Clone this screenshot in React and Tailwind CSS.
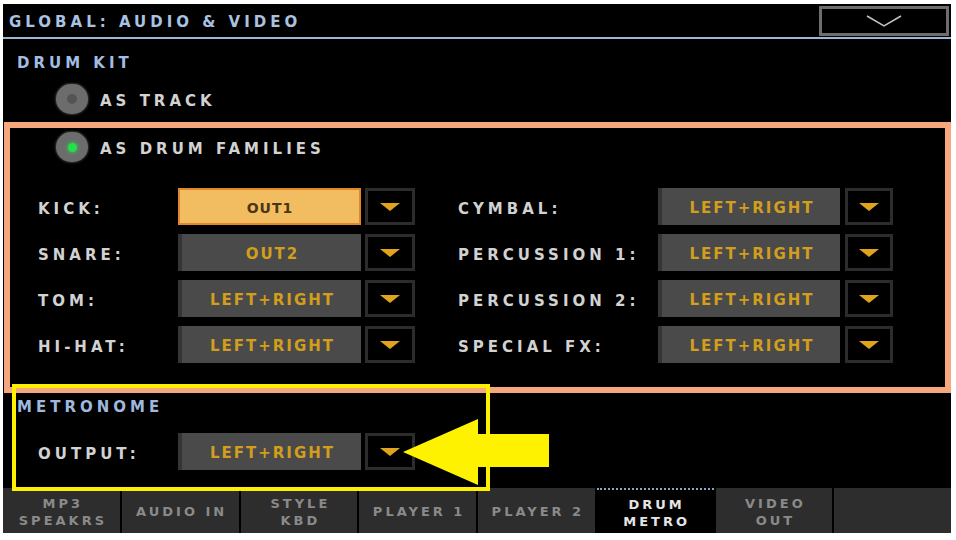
import React from "react";

const Arrow = () => (
  <svg width="20" height="8" viewBox="0 0 20 8">
    <polygon points="0,0 20,0 10,8" fill="#e0a41c" />
  </svg>
);

const Field = ({ value, active, w }) => (
  <div
    className={
      active
        ? `${w} h-[37px] pt-[3px] flex items-center justify-center bg-[#f2bd60] border-2 border-[#e2862a] text-[#4a3515] text-[14px] font-bold tracking-[1px]`
        : `${w} h-[37px] pt-[3px] flex items-center justify-center bg-[#4a4a4a] border-l-[4px] border-[#353535] text-[#d29e1c] text-[15px] font-bold tracking-[2px]`
    }
  >
    <span className={active ? "mr-[-1px]" : "mr-[-2px]"}>{value}</span>
  </div>
);

const DropBtn = ({ w, ml }) => (
  <div className={`${w} ${ml} h-[37px] flex items-center justify-center bg-black border-[3px] border-[#2c2c2c]`}>
    <Arrow />
  </div>
);

const Radio = ({ on }) => (
  <div className="w-[32px] h-[30px] rounded-full bg-[#6c6c6c] flex items-center justify-center shadow-[0_0_3px_#6c6c6c]">
    {on ? (
      <div className="w-[9px] h-[9px] rounded-full bg-[#22e048] shadow-[0_0_4px_#22e048]" />
    ) : (
      <div className="w-[10px] h-[10px] rounded-full bg-[#545454]" />
    )}
  </div>
);

const rows = [
  ["KICK:", "OUT1", true, "CYMBAL:", "LEFT+RIGHT"],
  ["SNARE:", "OUT2", false, "PERCUSSION 1:", "LEFT+RIGHT"],
  ["TOM:", "LEFT+RIGHT", false, "PERCUSSION 2:", "LEFT+RIGHT"],
  ["HI-HAT:", "LEFT+RIGHT", false, "SPECIAL FX:", "LEFT+RIGHT"],
];

const tabs = [
  ["MP3", "SPEAKRS"],
  ["AUDIO IN"],
  ["STYLE", "KBD"],
  ["PLAYER 1"],
  ["PLAYER 2"],
  ["DRUM", "METRO"],
  ["VIDEO", "OUT"],
  [],
];

export default function App() {
  return (
    <div className="w-[956px] h-[540px] bg-white pt-[4px] pl-[3px] font-['DejaVu_Sans',sans-serif] font-bold text-[15px] tracking-[4px] text-[#d2d2d2] overflow-hidden">
      <div className="relative w-[948px] h-[529px] bg-black flex flex-col">
        {/* header */}
        <div className="flex h-[35px] shrink-0 border-b-2 border-[#9db6d6]">
          <div className="pl-[6px] pt-[4px] h-[33px] flex items-center text-[#a9c2e2]">GLOBAL: AUDIO &amp; VIDEO</div>
          <div className="ml-auto mr-[2px] mt-[2px] w-[130px] h-[30px] border-[3px] border-[#6d6d6d] flex items-center justify-center">
            <svg width="36" height="12" viewBox="0 0 36 12">
              <polyline points="1,1 18,11 35,1" fill="none" stroke="#c4c4c4" strokeWidth="1.5" />
            </svg>
          </div>
        </div>

        <div className="h-[44px] shrink-0 pt-[4px] flex items-center pl-[14px] text-[#a3bde0]">DRUM KIT</div>
        <div className="h-[32px] shrink-0 flex items-center gap-[12px] pl-[53px]">
          <Radio />
          <span className="pt-[5px]">AS TRACK</span>
        </div>

        {/* drum families */}
        <div className="mt-[7px] ml-[1px] w-[947px] border-[6px] border-[#f5a77e] pb-[24px]">
          <div className="h-[38px] flex items-center gap-[12px] pl-[46px]">
            <Radio on />
            <span className="pt-[5px]">AS DRUM FAMILIES</span>
          </div>
          <div className="mt-[22px] flex flex-col gap-[9px] pl-[28px]">
            {rows.map(([l1, v1, act, l2, v2]) => (
              <div key={l1} className="flex items-center">
                <div className="w-[140px] pt-[5px]">{l1}</div>
                <Field value={v1} active={act} w="w-[183px]" />
                <DropBtn w="w-[50px]" ml="ml-[4px]" />
                <div className="w-[200px] ml-[43px] pt-[5px] whitespace-nowrap">{l2}</div>
                <Field value={v2} w="w-[182px]" />
                <DropBtn w="w-[48px]" ml="ml-[5px]" />
              </div>
            ))}
          </div>
        </div>

        {/* metronome */}
        <div className="h-[24px] shrink-0 pt-[4px] flex items-center pl-[14px] text-[#9fb9de]">METRONOME</div>
        <div className="mt-[16px] flex items-center pl-[35px]">
          <div className="w-[140px] pt-[5px]">OUTPUT:</div>
          <Field value="LEFT+RIGHT" w="w-[183px]" />
          <DropBtn w="w-[50px]" ml="ml-[4px]" />
        </div>

        {/* tabs */}
        <div className="mt-auto h-[45px] grid grid-cols-8 gap-x-[2px] bg-black">
          {tabs.map((t, i) =>
            i === 5 ? (
              <div key={i} className="flex flex-col items-center justify-center pt-[2px] bg-black border-t-2 border-dotted border-[#8ea4c4] text-[#e4e4e4] text-[13px] leading-[17px] tracking-[3px] pl-[3px]">
                {t.map((s) => (
                  <span key={s}>{s}</span>
                ))}
              </div>
            ) : (
              <div key={i} className="flex flex-col items-center justify-center pt-[2px] bg-[#2d2d2d] text-[#8a8a8a] text-[13px] leading-[17px] tracking-[3px] pl-[3px] whitespace-nowrap">
                {t.map((s) => (
                  <span key={s}>{s}</span>
                ))}
              </div>
            )
          )}
        </div>

        {/* annotations */}
        <div className="absolute left-[9px] top-[380px] w-[478px] h-[107px] border-4 border-[#fff000] pointer-events-none" />
        <svg className="absolute left-[400px] top-[415px]" width="146" height="67" viewBox="0 0 146 67">
          <polygon points="0,33 75,0 75,15 146,15 146,48 75,48 75,66" fill="#fff200" />
        </svg>
      </div>
    </div>
  );
}
